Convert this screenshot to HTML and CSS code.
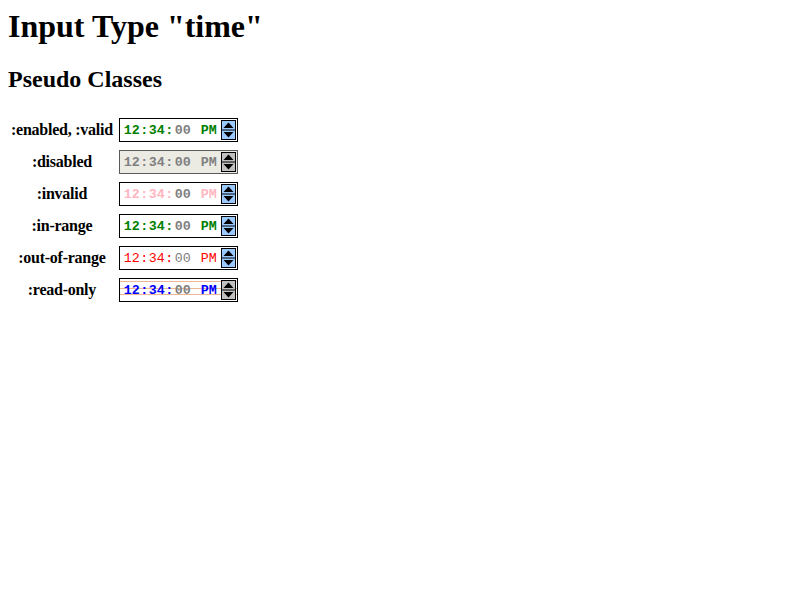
FILE: index.html
```html
<!DOCTYPE html>
<html>
<head>
<meta charset="utf-8">
<title>Input Type "time"</title>
<link rel="stylesheet" href="styles.css">
</head>
<body>
<h1>Input Type "time"</h1>
<h2>Pseudo Classes</h2>
<table class="grid">
  <tr>
    <th>:enabled, :valid</th>
    <td><div class="time valid"><span class="f">12</span><span class="f sep">:</span><span class="f">34</span><span class="f sep">:</span><span class="sec">00</span><span class="ampm">PM</span><svg class="spin" width="15" height="20" viewBox="0 0 15 20"><rect x="0.5" y="0.5" width="14" height="19" class="sb"/><line x1="0" y1="10" x2="15" y2="10" stroke="#000"/><polygon points="2.5,8 12.5,8 7.5,2.5"/><polygon points="2.5,12 12.5,12 7.5,17.5"/></svg></div></td>
  </tr>
  <tr>
    <th>:disabled</th>
    <td><div class="time disabled"><span class="f">12</span><span class="f sep">:</span><span class="f">34</span><span class="f sep">:</span><span class="sec">00</span><span class="ampm">PM</span><svg class="spin" width="15" height="20" viewBox="0 0 15 20"><rect x="0.5" y="0.5" width="14" height="19" class="sb"/><line x1="0" y1="10" x2="15" y2="10" stroke="#000"/><polygon points="2.5,8 12.5,8 7.5,2.5"/><polygon points="2.5,12 12.5,12 7.5,17.5"/></svg></div></td>
  </tr>
  <tr>
    <th>:invalid</th>
    <td><div class="time invalid"><span class="f">12</span><span class="f sep">:</span><span class="f">34</span><span class="f sep">:</span><span class="sec">00</span><span class="ampm">PM</span><svg class="spin" width="15" height="20" viewBox="0 0 15 20"><rect x="0.5" y="0.5" width="14" height="19" class="sb"/><line x1="0" y1="10" x2="15" y2="10" stroke="#000"/><polygon points="2.5,8 12.5,8 7.5,2.5"/><polygon points="2.5,12 12.5,12 7.5,17.5"/></svg></div></td>
  </tr>
  <tr>
    <th>:in-range</th>
    <td><div class="time valid"><span class="f">12</span><span class="f sep">:</span><span class="f">34</span><span class="f sep">:</span><span class="sec">00</span><span class="ampm">PM</span><svg class="spin" width="15" height="20" viewBox="0 0 15 20"><rect x="0.5" y="0.5" width="14" height="19" class="sb"/><line x1="0" y1="10" x2="15" y2="10" stroke="#000"/><polygon points="2.5,8 12.5,8 7.5,2.5"/><polygon points="2.5,12 12.5,12 7.5,17.5"/></svg></div></td>
  </tr>
  <tr>
    <th>:out-of-range</th>
    <td><div class="time outrange"><span class="f">12</span><span class="f sep">:</span><span class="f">34</span><span class="f sep">:</span><span class="sec">00</span><span class="ampm">PM</span><svg class="spin" width="15" height="20" viewBox="0 0 15 20"><rect x="0.5" y="0.5" width="14" height="19" class="sb"/><line x1="0" y1="10" x2="15" y2="10" stroke="#000"/><polygon points="2.5,8 12.5,8 7.5,2.5"/><polygon points="2.5,12 12.5,12 7.5,17.5"/></svg></div></td>
  </tr>
  <tr>
    <th>:read-only</th>
    <td><div class="time readonly"><span class="f">12</span><span class="f sep">:</span><span class="f">34</span><span class="f sep">:</span><span class="sec">00</span><span class="ampm">PM</span><svg class="spin" width="15" height="20" viewBox="0 0 15 20"><rect x="0.5" y="0.5" width="14" height="19" class="sb"/><line x1="0" y1="10" x2="15" y2="10" stroke="#000"/><polygon points="2.5,8 12.5,8 7.5,2.5"/><polygon points="2.5,12 12.5,12 7.5,17.5"/></svg></div></td>
  </tr>
</table>
</body>
</html>
```

FILE: styles.css
```css
body {
  margin: 8px;
  font-family: "Liberation Serif", "Times New Roman", serif;
  color: #000;
  background: #fff;
}

h1 {
  font-size: 32px;
  margin: 0 0 21px 0;
}

h2 {
  font-size: 24px;
  margin: 20px 0 20px 0;
}

.grid {
  border-spacing: 2px;
}

.grid th {
  padding: 1px;
  font-size: 16px;
  letter-spacing: -0.25px;
  text-align: center;
  vertical-align: middle;
}

.grid td {
  padding: 1px;
}

.time {
  display: flex;
  align-items: center;
  box-sizing: border-box;
  width: 119px;
  height: 24px;
  margin: 2px;
  padding: 1px 1px 0 4px;
  border: 1px solid #000;
  background: #fff;
  font-family: "Liberation Mono", "Courier New", monospace;
  font-size: 13.333px;
  font-weight: bold;
  line-height: 15px;
  white-space: pre;
}

.time .sep {
  margin-left: 0.5px;
  margin-right: 0.5px;
}

.time .sec {
  margin-left: 1px;
  color: #808080;
}

.time .ampm {
  margin-left: 10px;
}

.time .spin {
  margin-left: auto;
  margin-top: -1px;
  flex: none;
}

.spin .sb {
  fill: #99c9ff;
  stroke: #000;
}

.spin polygon {
  fill: #000;
}

.valid .f,
.valid .ampm {
  color: #008000;
}

.disabled {
  background: #ebebe4;
  border-color: #5a5a5a;
  color: #808080;
}

.disabled .spin .sb,
.readonly .spin .sb {
  fill: #c0c0c0;
}

.invalid .f,
.invalid .ampm {
  color: #ffb6c1;
}

.outrange {
  font-weight: normal;
}

.outrange .f,
.outrange .ampm {
  color: #ff0000;
}

.readonly {
  background:
    linear-gradient(#eeb898, #eeb898) 0 2px / 100% 1px no-repeat,
    linear-gradient(#eeb898, #eeb898) 0 9px / 100% 1px no-repeat,
    linear-gradient(#eeb898, #eeb898) 0 15px / 100% 1px no-repeat,
    #fff;
}

.readonly .f,
.readonly .ampm {
  color: #0000ff;
}
```
